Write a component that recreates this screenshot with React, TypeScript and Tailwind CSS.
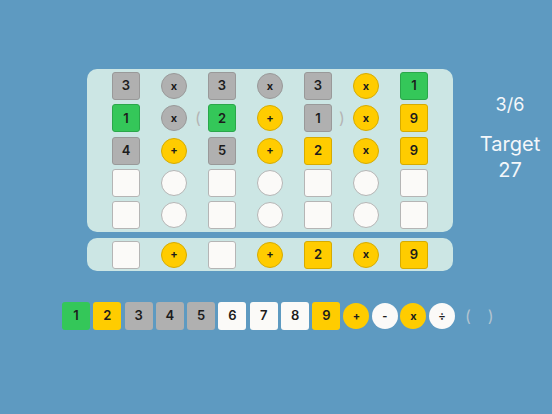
import React from "react";

type Kind = "g" | "G" | "y" | "w";
type Cell = { t: "tile" | "circ"; k: Kind; v?: string; p?: string };

const tileCls: Record<Kind, string> = {
  g: "bg-[#b0b0b0] border-[#999999]",
  G: "bg-[#34c759] border-[#2aa74a]",
  y: "bg-[#ffcc00] border-[#d6ab00]",
  w: "bg-[#fbfaf8] border-[#b5b5b5]",
};

const T = (k: Kind, v?: string, p?: string): Cell => ({ t: "tile", k, v, p });
const C = (k: Kind, v?: string, p?: string): Cell => ({ t: "circ", k, v, p });

const rows: Cell[][] = [
  [T("g", "3"), C("g", "x"), T("g", "3"), C("g", "x"), T("g", "3"), C("y", "x"), T("G", "1")],
  [T("G", "1"), C("g", "x"), T("G", "2", "("), C("y", "+"), T("g", "1"), C("y", "x", ")"), T("y", "9")],
  [T("g", "4"), C("y", "+"), T("g", "5"), C("y", "+"), T("y", "2"), C("y", "x"), T("y", "9")],
  [T("w"), C("w"), T("w"), C("w"), T("w"), C("w"), T("w")],
  [T("w"), C("w"), T("w"), C("w"), T("w"), C("w"), T("w")],
];

const answer: Cell[] = [T("w"), C("y", "+"), T("w"), C("y", "+"), T("y", "2"), C("y", "x"), T("y", "9")];

function Piece({ c }: { c: Cell }) {
  return (
    <div className="relative w-[48px] h-[28px] flex items-center justify-center">
      {c.p && (
        <span className="absolute left-0 top-1/2 -translate-x-1/2 -translate-y-1/2 text-[16px] text-[#b4b4b4] leading-none">
          {c.p}
        </span>
      )}
      {c.t === "tile" ? (
        <div
          className={`w-[28px] h-[28px] rounded-[3px] border flex items-center justify-center text-[13px] font-semibold text-[#1c1c1c] ${tileCls[c.k]}`}
        >
          {c.v}
        </div>
      ) : (
        <div
          className={`w-[26px] h-[26px] rounded-full border flex items-center justify-center text-[11px] font-bold text-[#1c1c1c] ${tileCls[c.k]}`}
        >
          {c.v}
        </div>
      )}
    </div>
  );
}

function Row({ cells }: { cells: Cell[] }) {
  return (
    <div className="flex">
      {cells.map((c, i) => (
        <Piece key={i} c={c} />
      ))}
    </div>
  );
}

const palTile: Record<Kind, string> = {
  g: "bg-[#b0b0b0]",
  G: "bg-[#34c759]",
  y: "bg-[#ffcc00]",
  w: "bg-[#fbfaf8]",
};

export default function App() {
  const digits: [string, Kind][] = [
    ["1", "G"], ["2", "y"], ["3", "g"], ["4", "g"], ["5", "g"], ["6", "w"], ["7", "w"], ["8", "w"], ["9", "y"],
  ];
  const ops: [string, Kind][] = [["+", "y"], ["-", "w"], ["x", "y"], ["÷", "w"]];
  return (
    <div
      className="w-[552px] h-[414px] bg-[#5e9ac1] overflow-hidden"
      style={{ fontFamily: "Inter, 'Liberation Sans', sans-serif" }}
    >
      <div className="flex pt-[69px] pl-[87px]">
        <div className="flex flex-col">
          <div className="w-[366px] bg-[#cce6e4] rounded-[10px] px-[15px] py-[3px] flex flex-col gap-[4.25px]">
            {rows.map((r, i) => (
              <Row key={i} cells={r} />
            ))}
          </div>
          <div className="mt-[6px] w-[366px] bg-[#cce6e4] rounded-[10px] px-[15px] py-[2.5px]">
            <Row cells={answer} />
          </div>
        </div>
        <div className="ml-[15px] w-[84px] pt-[24px] flex flex-col items-center text-[#f4f7fa]">
          <div className="text-[18px] leading-[24px]">3/6</div>
          <div className="mt-[14px] text-[20px] leading-[26px] text-center">
            Target
            <br />
            27
          </div>
        </div>
      </div>
      <div className="mt-[31px] pl-[62px] flex items-center">
        <div className="flex gap-[3.3px]">
          {digits.map(([v, k]) => (
            <div
              key={v}
              className={`w-[28px] h-[28px] rounded-[3px] flex items-center justify-center text-[13px] font-semibold text-[#1c1c1c] ${palTile[k]}`}
            >
              {v}
            </div>
          ))}
        </div>
        <div className="ml-[3px] flex gap-[2.5px]">
          {ops.map(([v, k]) => (
            <div
              key={v}
              className={`w-[26px] h-[26px] rounded-full flex items-center justify-center text-[11px] font-bold text-[#1c1c1c] ${palTile[k]}`}
            >
              {v}
            </div>
          ))}
        </div>
        <span className="ml-[10px] text-[16px] text-[#b3c4d0] leading-none">(</span>
        <span className="ml-[17px] text-[16px] text-[#b3c4d0] leading-none">)</span>
      </div>
    </div>
  );
}
